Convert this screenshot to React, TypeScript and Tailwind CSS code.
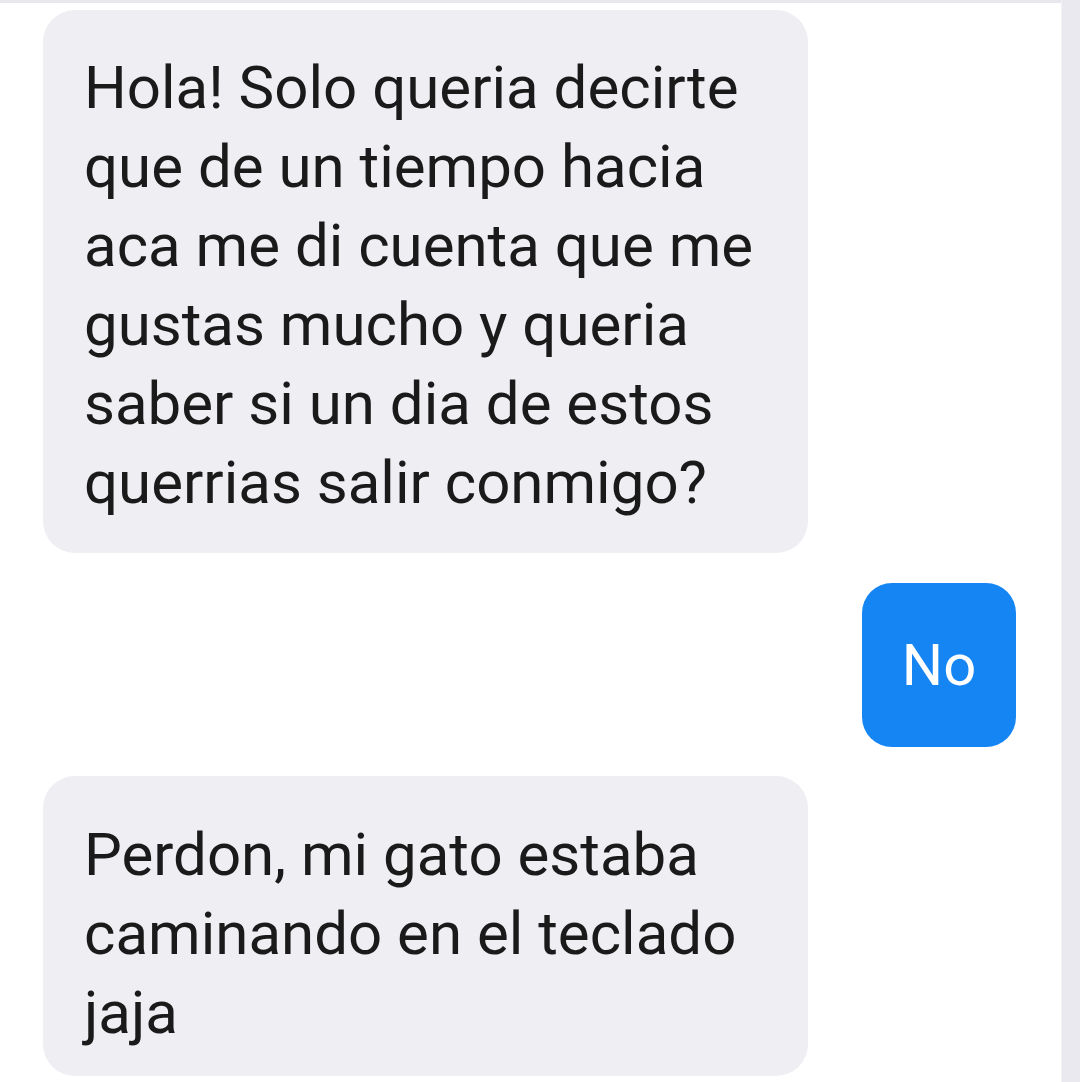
export default function App() {
  const font = { fontFamily: 'Roboto, "Liberation Sans", sans-serif' };
  return (
    <div className="flex w-[1080px] h-[1082px] overflow-hidden bg-white" style={font}>
      <div className="flex-1 flex flex-col border-t-[3px] border-[#e7e7ed]">
        <div className="ml-[43px] mt-[7px] w-[765px] h-[543px] shrink-0 rounded-[32px] bg-[#eeeef3] pl-[41px] pt-[38px] text-[60px] leading-[79px] text-[#1a1a1a]">
          Hola! Solo queria decirte<br />
          que de un tiempo hacia<br />
          aca me di cuenta que me<br />
          gustas mucho y queria<br />
          saber si un dia de estos<br />
          querrias salir conmigo?
        </div>
        <div className="flex justify-end mt-[30px] mr-[45px]">
          <div className="w-[154px] h-[164px] rounded-[30px] bg-[#1685f4] flex items-center justify-center text-[58px] text-white">
            No
          </div>
        </div>
        <div className="ml-[43px] mt-[29px] w-[765px] h-[300px] shrink-0 rounded-[32px] bg-[#eeeef3] pl-[41px] pt-[39px] text-[60px] leading-[79px] text-[#1a1a1a]">
          Perdon, mi gato estaba<br />
          caminando en el teclado<br />
          jaja
        </div>
      </div>
      <div className="w-[19px] bg-[#e9e9ef] border-l border-[#f3f3f6]" />
    </div>
  );
}
